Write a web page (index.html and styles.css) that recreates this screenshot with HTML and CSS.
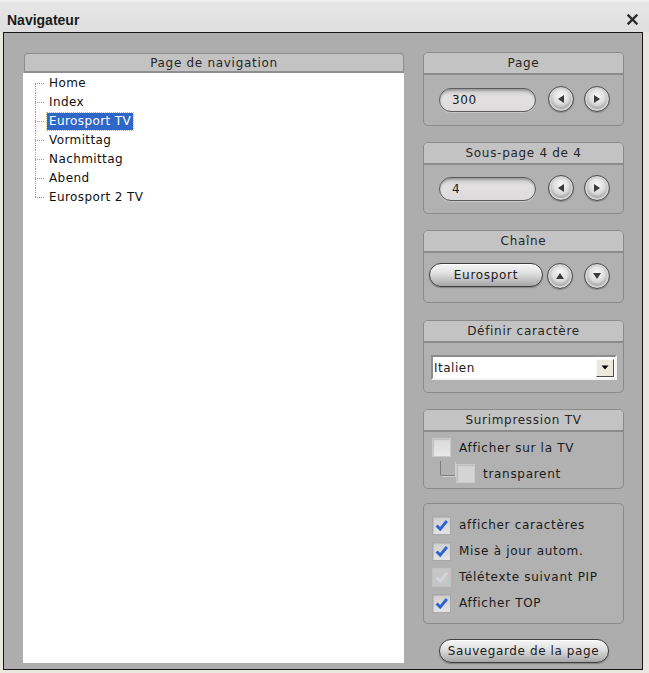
FILE: index.html
```html
<!DOCTYPE html>
<html lang="fr">
<head>
<meta charset="utf-8">
<title>Navigateur</title>
<link rel="stylesheet" href="styles.css">
</head>
<body>
<header class="titlebar">
  <span class="title">Navigateur</span>
  <svg class="close" viewBox="0 0 11 11" aria-label="Fermer"><path d="M1.5 1.5 L9.5 9.5 M9.5 1.5 L1.5 9.5" stroke="#2b2b2b" stroke-width="2.4" stroke-linecap="square"/></svg>
</header>

<main class="frame">
  <section class="nav-panel">
    <div class="pane-head">Page de navigation</div>
    <ul class="tree">
      <li><span class="label">Home</span></li>
      <li><span class="label">Index</span></li>
      <li><span class="label selected">Eurosport TV</span></li>
      <li><span class="label">Vormittag</span></li>
      <li><span class="label">Nachmittag</span></li>
      <li><span class="label">Abend</span></li>
      <li><span class="label">Eurosport 2 TV</span></li>
    </ul>
  </section>

  <aside class="controls">
    <div class="group">
      <div class="pane-head">Page</div>
      <div class="group-body stepper">
        <div class="field">300</div>
        <button class="round first"><svg viewBox="0 0 10 10"><polygon points="2,5 8,1 8,9"/></svg></button>
        <button class="round"><svg viewBox="0 0 10 10"><polygon points="8,5 2,1 2,9"/></svg></button>
      </div>
    </div>

    <div class="group">
      <div class="pane-head">Sous-page 4 de 4</div>
      <div class="group-body stepper">
        <div class="field">4</div>
        <button class="round first"><svg viewBox="0 0 10 10"><polygon points="2,5 8,1 8,9"/></svg></button>
        <button class="round"><svg viewBox="0 0 10 10"><polygon points="8,5 2,1 2,9"/></svg></button>
      </div>
    </div>

    <div class="group">
      <div class="pane-head">Chaîne</div>
      <div class="group-body channel">
        <button class="pill-btn channel-btn">Eurosport</button>
        <button class="round near"><svg viewBox="0 0 10 10"><polygon points="5,2 1,8 9,8"/></svg></button>
        <button class="round"><svg viewBox="0 0 10 10"><polygon points="5,8 1,2 9,2"/></svg></button>
      </div>
    </div>

    <div class="group charset-group">
      <div class="pane-head">Définir caractère</div>
      <div class="group-body charset">
        <div class="select">
          <span class="select-text">Italien</span>
          <span class="select-arrow"><svg viewBox="0 0 8 5"><polygon points="0.5,0.5 7.5,0.5 4,4.5"/></svg></span>
        </div>
      </div>
    </div>

    <div class="group">
      <div class="pane-head">Surimpression TV</div>
      <div class="group-body overlay">
        <label class="check-row"><span class="box"></span>Afficher sur la TV</label>
        <label class="check-row sub"><span class="elbow"></span><span class="box"></span>transparent</label>
      </div>
    </div>

    <div class="group options">
      <label class="check-row"><span class="box on"><svg viewBox="0 0 19 19"><path d="M4 9.5 L8 13.5 L15.5 4.5"/></svg></span>afficher caractères</label>
      <label class="check-row"><span class="box on"><svg viewBox="0 0 19 19"><path d="M4 9.5 L8 13.5 L15.5 4.5"/></svg></span>Mise à jour autom.</label>
      <label class="check-row"><span class="box on off"><svg viewBox="0 0 19 19"><path d="M4 9.5 L8 13.5 L15.5 4.5"/></svg></span>Télétexte suivant PIP</label>
      <label class="check-row"><span class="box on"><svg viewBox="0 0 19 19"><path d="M4 9.5 L8 13.5 L15.5 4.5"/></svg></span>Afficher TOP</label>
    </div>

    <button class="pill-btn save-btn">Sauvegarde de la page</button>
  </aside>
</main>
</body>
</html>
```

FILE: styles.css
```css
* { box-sizing: border-box; }

html, body { margin: 0; }

body {
  width: 649px;
  height: 673px;
  overflow: hidden;
  background: #e8e8e0;
  font-family: "DejaVu Sans", Verdana, sans-serif;
  font-size: 12px;
  color: #1b1b1b;
}

button {
  font: inherit;
  color: inherit;
  padding: 0;
  margin: 0;
  cursor: default;
}

/* window caption */
.titlebar {
  height: 32px;
  display: flex;
  align-items: center;
  justify-content: space-between;
  padding: 7px 11px 0 7px;
  background: linear-gradient(#f4f4f4 0, #e6e6e6 3px, #dedede 100%);
}

.title {
  font-family: "Liberation Sans", Arial, sans-serif;
  font-weight: bold;
  font-size: 14px;
  color: #1a1a1a;
}

.close { width: 11px; height: 11px; }

/* dialog body */
.frame {
  margin-left: 3px;
  width: 640px;
  height: 638px;
  border: 1px solid #161616;
  background: #adadad;
  display: flex;
  gap: 19px;
  padding: 20px 18px 6px 19px;
}

.pane-head {
  height: 22px;
  line-height: 20px;
  text-align: center;
  letter-spacing: 0.7px;
  background: #c3c3c3;
  border-bottom: 2px solid #8b8b8b;
  color: #262626;
}

/* navigation tree */
.nav-panel {
  width: 381px;
  display: flex;
  flex-direction: column;
}

.nav-panel .pane-head {
  height: 20px;
  line-height: 18px;
  border: 1px solid #8e8e8e;
  border-bottom-width: 2px;
  border-radius: 4px 4px 0 0;
  margin-left: 1px;
}

.tree {
  flex: 1;
  list-style: none;
  margin: 0;
  padding: 1px 0 0 12px;
  background: #fff;
  letter-spacing: 0.4px;
  color: #111;
}

.tree li {
  height: 19px;
  line-height: 17px;
  padding: 1px 0 1px 12px;
  background-image:
    repeating-linear-gradient(to bottom, #9a9a9a 0 1px, transparent 1px 2px),
    repeating-linear-gradient(to right, #9a9a9a 0 1px, transparent 1px 2px);
  background-size: 1px 100%, 10px 1px;
  background-position: 0 0, 0 9px;
  background-repeat: no-repeat;
}

.tree li:first-child { background-size: 1px 50%, 10px 1px; background-position: 0 10px, 0 9px; }
.tree li:last-child { background-size: 1px 10px, 10px 1px; }

.label {
  display: inline-block;
  height: 17px;
  padding: 0 2px;
}

.label.selected {
  background: #2f67c8;
  color: #fff;
  outline: 1px dotted #cdb76a;
}

/* right-hand control column */
.controls {
  width: 201px;
  display: flex;
  flex-direction: column;
  gap: 16px;
  margin-top: -1px;
}

.group {
  border: 1px solid #8a8a8a;
  border-radius: 5px;
  background: #b1b1b1;
  overflow: hidden;
}

.group-body { display: flex; align-items: center; }

.stepper { height: 50px; padding-left: 15px; }
.controls .group:nth-child(2) .stepper,
.controls .group:nth-child(3) .channel,
.controls .group:nth-child(4) .charset { height: 49px; }

.charset-group { margin-top: 1px; }

.field {
  width: 97px;
  height: 24px;
  line-height: 22px;
  padding-left: 12px;
  border: 1px solid #5c5c5c;
  border-radius: 12px;
  background: linear-gradient(#c9c9c9, #e2e0e0 35%, #dddbdb);
  box-shadow: inset 0 2px 2px rgba(0,0,0,0.22), 0 1px 0 #c8c8c8;
  letter-spacing: 0.6px;
}

.round {
  width: 26px;
  height: 26px;
  border-radius: 50%;
  border: 1px solid #4e4e4e;
  background: radial-gradient(circle at 50% 38%, #f8f8f8 0, #dedede 40%, #b4b4b4 70%, #8c8c8c 100%);
  box-shadow: inset 0 0 0 2px #d2d2d2, inset 0 -2px 4px rgba(0,0,0,0.25), 0 1px 1px rgba(0,0,0,0.2);
  display: flex;
  align-items: center;
  justify-content: center;
  margin-left: 10px;
  margin-top: -3px;
}

.round.first { margin-left: 12px; }
.round.near { margin-left: 4px; }
.channel .round:last-child { margin-left: 11px; }

.round svg { width: 10px; height: 10px; fill: #3a3a3a; }

.channel { padding-left: 5px; }

.pill-btn {
  height: 24px;
  border: 1px solid #3e3e3e;
  border-radius: 12px;
  background: linear-gradient(#f6f6f6 0, #e2e2e2 40%, #c4c4c4 70%, #a6a6a6 100%);
  box-shadow: inset 0 1px 0 #fff, 0 1px 1px rgba(0,0,0,0.25);
  letter-spacing: 0.7px;
  color: #1c1c1c;
}

.channel-btn { width: 114px; margin-top: -5px; }

/* character-set drop-down */
.charset { padding-left: 7px; padding-top: 0; }

.select {
  width: 186px;
  height: 25px;
  background: #fff;
  border: 2px solid;
  border-color: #8d8d8d #f4f4f4 #f4f4f4 #8d8d8d;
  display: flex;
  align-items: center;
  justify-content: space-between;
  padding: 0 1px 0 1px;
  letter-spacing: 0.5px;
}

.select-arrow {
  width: 18px;
  height: 18px;
  background: #ebe9dc;
  border: 1px solid;
  border-color: #fafafa #4a4a4a #4a4a4a #fafafa;
  display: flex;
  align-items: center;
  justify-content: center;
}

.select-arrow svg { width: 8px; height: 5px; fill: #000; }

/* check boxes */
.check-row {
  display: flex;
  align-items: center;
  gap: 8px;
  height: 26px;
  letter-spacing: 0.7px;
  color: #1a1a1a;
}

.box {
  width: 19px;
  height: 19px;
  flex: none;
  border: 1px solid #c9c9c9;
  background: linear-gradient(#dadada, #e8e8e8);
  box-shadow: inset 1px 1px 1px rgba(0,0,0,0.12);
  display: flex;
  align-items: center;
  justify-content: center;
}

.box svg { width: 19px; height: 19px; fill: none; stroke: #2d62d2; stroke-width: 3.2; }

.box.on {
  border-color: #a8a8a8;
  background: linear-gradient(#cfcfcf, #e4e4e4);
}

.box.off { border-color: #c2c2c2; background: #c6c6c6; box-shadow: none; }
.box.off svg { stroke: #d2d4dc; }

.overlay {
  height: 57px;
  flex-direction: column;
  align-items: stretch;
  padding: 3px 0 0 8px;
}

.check-row.sub { gap: 0; }
.check-row.sub .box { margin-right: 8px; background: #d4d4d4; border-color: #cacaca; }

.elbow {
  width: 24px;
  height: 26px;
  flex: none;
  display: flex;
}

.elbow::before {
  content: "";
  width: 14px;
  height: 14px;
  margin: 0 0 0 8px;
  border-left: 1px solid #7c7c7c;
  border-bottom: 1px solid #7c7c7c;
  box-shadow: 1px 1px 0 #cfcfcf;
  border-bottom-left-radius: 2px;
}

.options {
  padding: 8px 0 7px 8px;
  margin-top: -2px;
}

.save-btn {
  align-self: center;
  width: 170px;
  height: 24px;
  margin-top: -1px;
  letter-spacing: 0.6px;
  padding: 0 0 1px;
}
```
